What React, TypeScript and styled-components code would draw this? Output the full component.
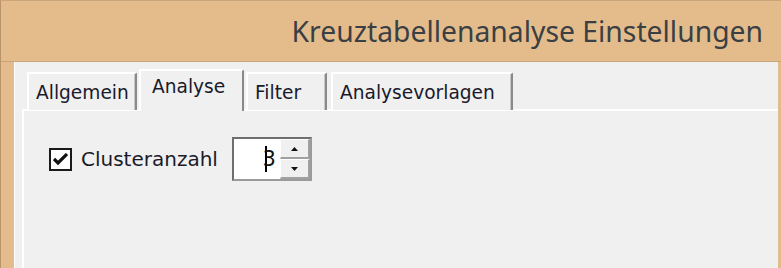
import React, { useState } from "react";
import styled, { createGlobalStyle } from "styled-components";

const GlobalStyle = createGlobalStyle`
  html, body {
    margin: 0;
    padding: 0;
    background: #e4bc8c;
  }
`;

const Window = styled.div`
  width: 781px;
  height: 268px;
  box-sizing: border-box;
  background: #e4bc8c;
  border-left: 1px solid #b8956a;
  border-top: 1px solid #c9a57a;
  display: flex;
  flex-direction: column;
  overflow: hidden;
`;

const TitleBar = styled.div`
  height: 60px;
  flex: none;
  display: flex;
  align-items: center;
  justify-content: flex-end;
  padding-right: 18px;
  font-family: "Noto Sans", "Open Sans", sans-serif;
  font-size: 28.3px;
  color: #3a3f44;
  border-bottom: 1px solid #c9a57a;
`;

const Client = styled.div`
  flex: 1;
  margin-left: 13px;
  margin-right: 3px;
  background: #f0f0f0;
  border-left: 1px solid #ffffff;
  display: flex;
  flex-direction: column;
  padding: 7px 0 0 7px;
  font-family: "DejaVu Sans", "Noto Sans", sans-serif;
`;

const TabStrip = styled.div`
  display: flex;
  align-items: flex-end;
  gap: 4px;
  padding-left: 5px;
  height: 41px;
  flex: none;
  position: relative;
  z-index: 1;
`;

const Tab = styled.div<{ $active?: boolean; $width: number }>`
  box-sizing: border-box;
  width: ${(p) => p.$width}px;
  height: ${(p) => (p.$active ? "42px" : "38px")};
  margin: ${(p) => (p.$active ? "0 -2px -1px -2px" : "0")};
  padding: ${(p) => (p.$active ? "5px 0 0 11px" : "8px 0 0 7px")};
  background: #f0f0f0;
  border-top: 2px solid #ffffff;
  border-left: 2px solid #ffffff;
  border-right: 2px solid #8a8a8a;
  box-shadow: ${(p) => (p.$active ? "none" : "inset -1px 0 0 #c8c8c8")};
  border-radius: 2px 2px 0 0;
  font-size: 18.6px;
  color: #1a1a2a;
  white-space: nowrap;
  position: relative;
  z-index: ${(p) => (p.$active ? 2 : 1)};
`;

const Panel = styled.div`
  flex: 1;
  border-top: 2px solid #ffffff;
  border-left: 2px solid #ffffff;
  margin-top: -1px;
  padding: 26px 0 0 25px;
  display: flex;
  align-items: flex-start;
`;

const Row = styled.div`
  display: flex;
  align-items: center;
`;

const CheckBox = styled.div`
  width: 23px;
  height: 23px;
  box-sizing: border-box;
  border: 2px solid #1a1a1a;
  background: #ffffff;
  display: flex;
  align-items: center;
  justify-content: center;
`;

const Label = styled.span`
  margin-left: 9px;
  font-size: 20px;
  color: #1a1a2a;
`;

const Spinner = styled.div`
  margin-left: 14px;
  width: 80px;
  height: 44px;
  box-sizing: border-box;
  border: 2px solid #9a9a9a;
  border-top-color: #6e6e6e;
  border-left-color: #6e6e6e;
  background: #ffffff;
  display: flex;
`;

const SpinValue = styled.div`
  flex: 1;
  display: flex;
  align-items: center;
  justify-content: flex-end;
  padding-right: 3px;
  font-size: 21px;
  color: #111;
`;

const Caret = styled.span`
  display: inline-block;
  width: 2px;
  height: 26px;
  background: #000;
  margin-right: -4px;
`;

const SpinButtons = styled.div`
  width: 30px;
  display: flex;
  flex-direction: column;
  border-left: 1px solid #ffffff;
`;

const SpinButton = styled.div`
  flex: 1;
  background: #f0f0f0;
  border-top: 1px solid #ffffff;
  border-left: 1px solid #ffffff;
  border-bottom: 2px solid #a0a0a0;
  border-right: 2px solid #a0a0a0;
  display: flex;
  align-items: center;
  justify-content: center;
`;

const Arrow = ({ up }: { up?: boolean }) => (
  <svg width="7" height="4" viewBox="0 0 7 4">
    <path d={up ? "M0 4 L3.5 0 L7 4 Z" : "M0 0 L3.5 4 L7 0 Z"} fill="#111" />
  </svg>
);

const tabs = [
  { title: "Allgemein", width: 110 },
  { title: "Analyse", width: 105 },
  { title: "Filter", width: 81 },
  { title: "Analysevorlagen", width: 182 },
];

export default function App() {
  const [active] = useState("Analyse");
  return (
    <>
      <GlobalStyle />
      <Window>
        <TitleBar>Kreuztabellenanalyse Einstellungen</TitleBar>
        <Client>
          <TabStrip>
            {tabs.map((t) => (
              <Tab key={t.title} $width={t.width} $active={t.title === active}>
                {t.title}
              </Tab>
            ))}
          </TabStrip>
          <Panel>
            <Row>
              <CheckBox>
                <svg width="15" height="13" viewBox="0 0 15 13">
                  <path
                    d="M1 6 L5 10 L14 1"
                    stroke="#111"
                    strokeWidth="3.2"
                    fill="none"
                  />
                </svg>
              </CheckBox>
              <Label>Clusteranzahl</Label>
              <Spinner>
                <SpinValue>
                  <Caret />3
                </SpinValue>
                <SpinButtons>
                  <SpinButton>
                    <Arrow up />
                  </SpinButton>
                  <SpinButton>
                    <Arrow />
                  </SpinButton>
                </SpinButtons>
              </Spinner>
            </Row>
          </Panel>
        </Client>
      </Window>
    </>
  );
}
